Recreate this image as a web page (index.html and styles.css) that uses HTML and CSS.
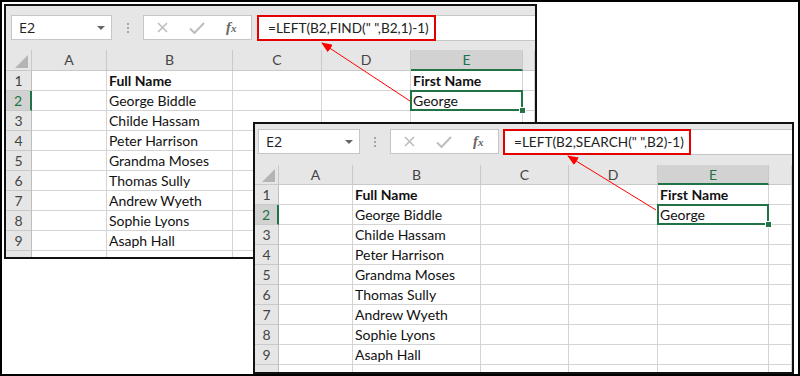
FILE: index.html
```html
<!DOCTYPE html>
<html lang="en">
<head>
  <meta charset="UTF-8" />
  <title>LEFT with FIND and SEARCH</title>
  <link rel="stylesheet" href="styles.css">
</head>
<body>

<div class="frame">

  <!-- back window: FIND -->
  <div class="sheet sheet-back">
    <div class="toolbar">
      <div class="namebox">E2<span class="caret"></span></div>
      <div class="grip"><i></i><i></i><i></i></div>
      <div class="fnbtns">
        <svg width="11" height="11" viewBox="0 0 11 11"><path d="M1 1L10 10M10 1L1 10" stroke="#bdbdbd" stroke-width="1.6"/></svg>
        <svg width="16" height="12" viewBox="0 0 16 12"><path d="M1 6.5L5.5 11L15 1" stroke="#bdbdbd" stroke-width="2" fill="none"/></svg>
        <span class="fx">f<small>x</small></span>
      </div>
      <div class="formula"><span class="hl">=LEFT(B2,FIND(" ",B2,1)-1)</span></div>
    </div>
    <div class="grid">
      <div class="c hd corner"></div><div class="c hd">A</div><div class="c hd">B</div><div class="c hd">C</div><div class="c hd">D</div><div class="c hd hd-sel">E</div><div class="c hd"></div>
      <div class="c rh">1</div><div class="c"></div><div class="c b">Full Name</div><div class="c"></div><div class="c"></div><div class="c b">First Name</div><div class="c"></div>
      <div class="c rh rh-sel">2</div><div class="c"></div><div class="c">George Biddle</div><div class="c"></div><div class="c"></div><div class="c sel">George</div><div class="c"></div>
      <div class="c rh">3</div><div class="c"></div><div class="c">Childe Hassam</div><div class="c"></div><div class="c"></div><div class="c"></div><div class="c"></div>
      <div class="c rh">4</div><div class="c"></div><div class="c">Peter Harrison</div><div class="c"></div><div class="c"></div><div class="c"></div><div class="c"></div>
      <div class="c rh">5</div><div class="c"></div><div class="c">Grandma Moses</div><div class="c"></div><div class="c"></div><div class="c"></div><div class="c"></div>
      <div class="c rh">6</div><div class="c"></div><div class="c">Thomas Sully</div><div class="c"></div><div class="c"></div><div class="c"></div><div class="c"></div>
      <div class="c rh">7</div><div class="c"></div><div class="c">Andrew Wyeth</div><div class="c"></div><div class="c"></div><div class="c"></div><div class="c"></div>
      <div class="c rh">8</div><div class="c"></div><div class="c">Sophie Lyons</div><div class="c"></div><div class="c"></div><div class="c"></div><div class="c"></div>
      <div class="c rh">9</div><div class="c"></div><div class="c">Asaph Hall</div><div class="c"></div><div class="c"></div><div class="c"></div><div class="c"></div>
      <div class="c rh"></div><div class="c"></div><div class="c"></div><div class="c"></div><div class="c"></div><div class="c"></div><div class="c"></div>
    </div>
  </div>

  <!-- front window: SEARCH -->
  <div class="sheet sheet-front">
    <div class="toolbar">
      <div class="namebox">E2<span class="caret"></span></div>
      <div class="grip"><i></i><i></i><i></i></div>
      <div class="fnbtns">
        <svg width="11" height="11" viewBox="0 0 11 11"><path d="M1 1L10 10M10 1L1 10" stroke="#bdbdbd" stroke-width="1.6"/></svg>
        <svg width="16" height="12" viewBox="0 0 16 12"><path d="M1 6.5L5.5 11L15 1" stroke="#bdbdbd" stroke-width="2" fill="none"/></svg>
        <span class="fx">f<small>x</small></span>
      </div>
      <div class="formula"><span class="hl">=LEFT(B2,SEARCH(" ",B2)-1)</span></div>
    </div>
    <div class="grid">
      <div class="c hd corner"></div><div class="c hd">A</div><div class="c hd">B</div><div class="c hd">C</div><div class="c hd">D</div><div class="c hd hd-sel">E</div><div class="c hd"></div>
      <div class="c rh">1</div><div class="c"></div><div class="c b">Full Name</div><div class="c"></div><div class="c"></div><div class="c b">First Name</div><div class="c"></div>
      <div class="c rh rh-sel">2</div><div class="c"></div><div class="c">George Biddle</div><div class="c"></div><div class="c"></div><div class="c sel">George</div><div class="c"></div>
      <div class="c rh">3</div><div class="c"></div><div class="c">Childe Hassam</div><div class="c"></div><div class="c"></div><div class="c"></div><div class="c"></div>
      <div class="c rh">4</div><div class="c"></div><div class="c">Peter Harrison</div><div class="c"></div><div class="c"></div><div class="c"></div><div class="c"></div>
      <div class="c rh">5</div><div class="c"></div><div class="c">Grandma Moses</div><div class="c"></div><div class="c"></div><div class="c"></div><div class="c"></div>
      <div class="c rh">6</div><div class="c"></div><div class="c">Thomas Sully</div><div class="c"></div><div class="c"></div><div class="c"></div><div class="c"></div>
      <div class="c rh">7</div><div class="c"></div><div class="c">Andrew Wyeth</div><div class="c"></div><div class="c"></div><div class="c"></div><div class="c"></div>
      <div class="c rh">8</div><div class="c"></div><div class="c">Sophie Lyons</div><div class="c"></div><div class="c"></div><div class="c"></div><div class="c"></div>
      <div class="c rh">9</div><div class="c"></div><div class="c">Asaph Hall</div><div class="c"></div><div class="c"></div><div class="c"></div><div class="c"></div>
      <div class="c rh"></div><div class="c"></div><div class="c"></div><div class="c"></div><div class="c"></div><div class="c"></div><div class="c"></div>
    </div>
  </div>

  <svg class="arrows" width="800" height="376" viewBox="0 0 800 376">
    <defs>
      <marker id="head" markerUnits="userSpaceOnUse" markerWidth="11" markerHeight="9" refX="10" refY="4.5" orient="auto">
        <path d="M0 0L11 4.5L0 9z" fill="#f00"/>
      </marker>
    </defs>
    <line x1="410" y1="101" x2="322" y2="43" stroke="#f00" stroke-width="1" marker-end="url(#head)"/>
    <line x1="656" y1="210" x2="568" y2="156" stroke="#f00" stroke-width="1" marker-end="url(#head)"/>
  </svg>

</div>

</body>
</html>
```

FILE: styles.css
```css
body {
  margin: 0;
  background: #fff;
}
.frame {
  position: relative;
  width: 800px;
  height: 376px;
  box-sizing: border-box;
  border: 2px solid #000;
  background: #fff;
  overflow: hidden;
}
.sheet {
  box-sizing: border-box;
  border: 2px solid #111;
  background: #fff;
  overflow: hidden;
}
.sheet-back {
  width: 533px;
  height: 255px;
  margin: 2px;
}
.sheet-front {
  position: absolute;
  left: 251px;
  top: 120px;
  width: 541px;
  height: 252px;
}

/* formula bar */
.toolbar {
  display: flex;
  align-items: flex-start;
  box-sizing: border-box;
  background: #e6e6e6;
}
.sheet-back .toolbar {
  height: 44px;
  padding: 9px 0 0 5px;
}
.sheet-front .toolbar {
  height: 41px;
  padding: 5px 0 0 3px;
}
.namebox {
  position: relative;
  width: 101px;
  height: 25px;
  box-sizing: border-box;
  padding-left: 7px;
  background: #fff;
  border: 1px solid #c6c6c6;
  font: 14.5px "Open Sans", sans-serif;
  line-height: 23px;
  color: #222;
}
.sheet-front .namebox {
  width: 102px;
}
.caret {
  position: absolute;
  right: 6px;
  top: 10px;
  border-left: 4px solid transparent;
  border-right: 4px solid transparent;
  border-top: 4px solid #666;
}
.grip {
  width: 31px;
  display: flex;
  flex-direction: column;
  align-items: center;
  gap: 2px;
  padding-top: 8px;
}
.sheet-front .grip {
  width: 30px;
}
.grip i {
  width: 2px;
  height: 2px;
  background: #a6a6a6;
}
.fnbtns {
  width: 109px;
  height: 25px;
  box-sizing: border-box;
  display: flex;
  align-items: center;
  gap: 21px;
  padding-left: 13px;
  background: #fff;
  border: 1px solid #c6c6c6;
}
.fx {
  font: italic bold 15px "Liberation Serif", serif;
  color: #666;
}
.fx small {
  font-size: 11px;
}
.formula {
  flex: 1;
  height: 26px;
  margin-left: 5px;
  box-sizing: border-box;
  background: #fff;
  border-top: 1px solid #c6c6c6;
  border-bottom: 1px solid #c6c6c6;
}
.sheet-front .formula {
  margin-left: 4px;
}
.hl {
  display: inline-block;
  height: 26px;
  margin-top: -1px;
  box-sizing: border-box;
  padding: 0 5px 0 9px;
  border: 2px solid #e50000;
  font: 13.6px Lato, sans-serif;
  line-height: 22px;
  color: #222;
  white-space: nowrap;
}

/* cells */
.grid {
  display: grid;
}
.sheet-back .grid {
  grid-template-columns: 26px 75px 126px 89px 89px 112px 1fr;
  grid-template-rows: 21px repeat(10, 20px);
}
.sheet-front .grid {
  grid-template-columns: 24px 74px 128px 88px 89px 111px 1fr;
  grid-template-rows: 20px repeat(10, 20px);
}
.c {
  position: relative;
  box-sizing: border-box;
  padding-left: 2px;
  border-right: 1px solid #d4d4d4;
  border-bottom: 1px solid #d4d4d4;
  font: 14px Lato, sans-serif;
  line-height: 20px;
  color: #111;
  white-space: nowrap;
}
.b {
  font-weight: bold;
}
.hd, .rh {
  padding-left: 0;
  text-align: center;
  background: #e6e6e6;
  border-color: #c9c9c9;
  color: #444;
}
.rh {
  border-right-color: #bdbdbd;
}
.hd-sel {
  background: #d2d2d2;
  color: #217346;
  border-bottom: 2px solid #217346;
}
.rh-sel {
  background: #d2d2d2;
  color: #217346;
  border-right: 2px solid #217346;
}
.corner::after {
  content: "";
  position: absolute;
  right: 3px;
  bottom: 2px;
  border-left: 13px solid transparent;
  border-bottom: 13px solid #b4b4b4;
}
.sel {
  z-index: 1;
}
.sel::before {
  content: "";
  position: absolute;
  left: -1px;
  top: -1px;
  right: -1px;
  bottom: -1px;
  border: 2px solid #217346;
}
.sel::after {
  content: "";
  position: absolute;
  right: -4px;
  bottom: -4px;
  width: 5px;
  height: 5px;
  background: #217346;
  border: 1px solid #fff;
}

.arrows {
  position: absolute;
  left: -2px;
  top: -2px;
  pointer-events: none;
}
```
